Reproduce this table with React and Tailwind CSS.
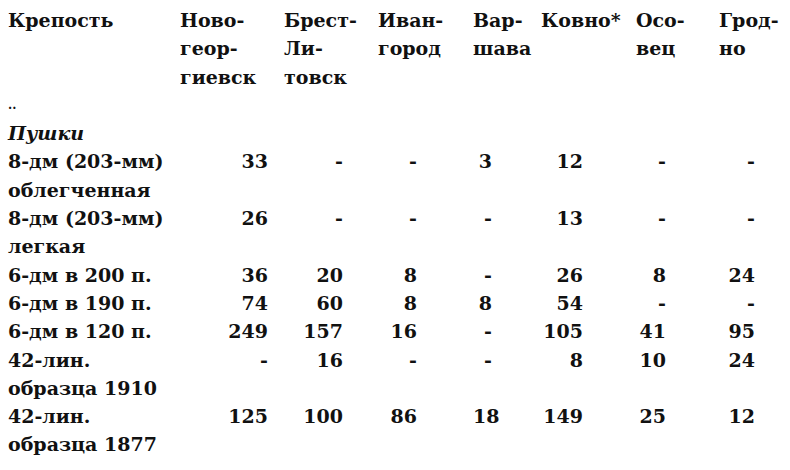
import React from 'react';

const cols = [
  'Ново-\nгеор-\nгиевск',
  'Брест-\nЛи-\nтовск',
  'Иван-\nгород',
  'Вар-\nшава',
  'Ковно*',
  'Осо-\nвец',
  'Грод-\nно',
];

// right padding for numbers in each column
const numPad = ['pr-[16px]', 'pr-[35px]', 'pr-[56px]', 'pr-[49px]', 'pr-[53px]', 'pr-[53px]', 'pr-[35px]'];

const rows = [
  { label: '8-дм (203-мм)\nоблегченная', values: ['33', '-', '-', '3', '12', '-', '-'] },
  { label: '8-дм (203-мм)\nлегкая', values: ['26', '-', '-', '-', '13', '-', '-'] },
  { label: '6-дм в 200 п.', values: ['36', '20', '8', '-', '26', '8', '24'] },
  { label: '6-дм в 190 п.', values: ['74', '60', '8', '8', '54', '-', '-'] },
  { label: '6-дм в 120 п.', values: ['249', '157', '16', '-', '105', '41', '95'] },
  { label: '42-лин.\nобразца 1910', values: ['-', '16', '-', '-', '8', '10', '24'] },
  { label: '42-лин.\nобразца 1877', values: ['125', '100', '86', '18', '149', '25', '12'] },
];

const gridCols = 'grid grid-cols-[172px_104px_94px_95px_68px_95px_83px_1fr]';

export default function App() {
  return (
    <div
      className="w-[790px] h-[470px] bg-white text-[#111] pl-[8px] pt-[6px] overflow-hidden font-bold text-[19px] leading-[28.3px]"
      style={{ fontFamily: '"DejaVu Serif", serif' }}
    >
      {/* header */}
      <div className={gridCols}>
        <div>Крепость</div>
        {cols.map((c) => (
          <div key={c} className="whitespace-pre-line">
            {c}
          </div>
        ))}
      </div>

      <div className="text-[12px]">..</div>
      <div className="italic">Пушки</div>

      {rows.map((row, i) => (
        <div key={i} className={gridCols}>
          <div className="whitespace-pre-line">{row.label}</div>
          {row.values.map((v, j) => (
            <div key={j} className={'text-right ' + numPad[j]}>
              {v}
            </div>
          ))}
        </div>
      ))}
    </div>
  );
}
